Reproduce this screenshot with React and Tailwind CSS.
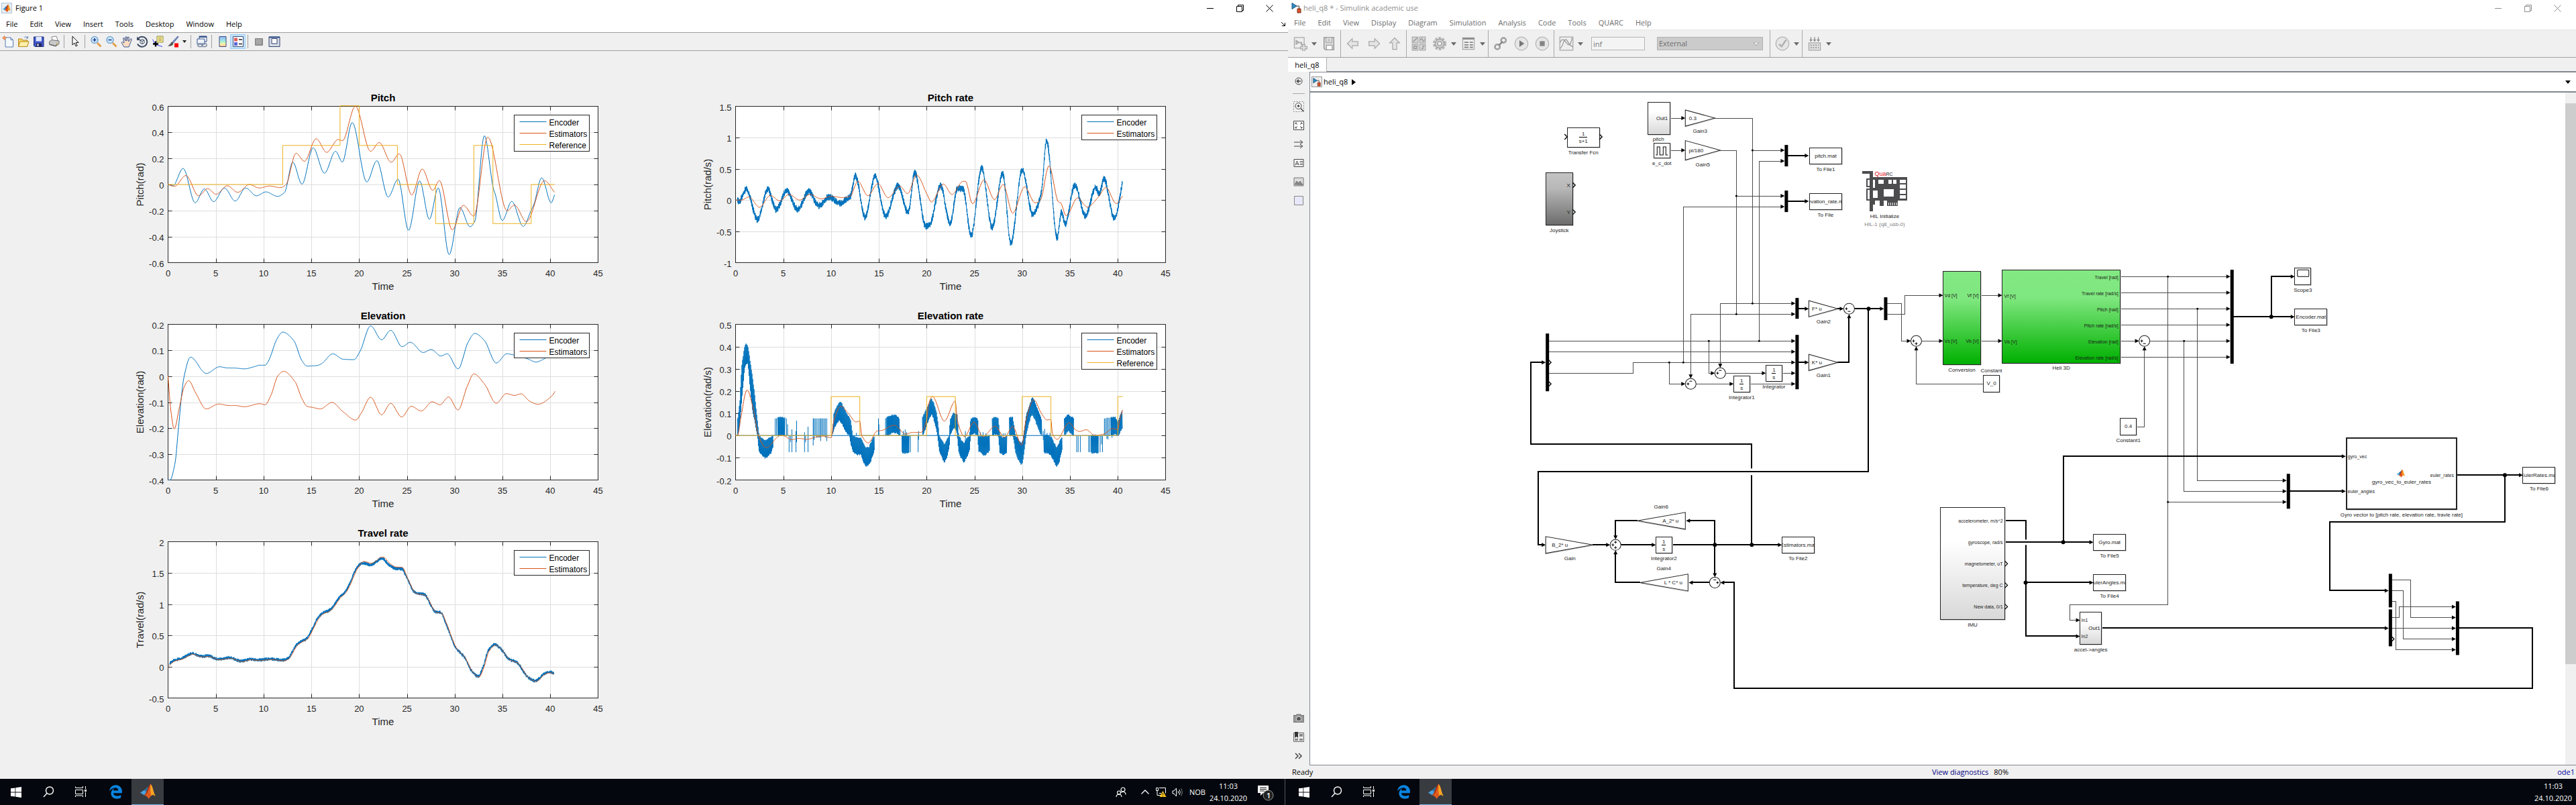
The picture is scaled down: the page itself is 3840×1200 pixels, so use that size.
import React from "react";
import { FaEdgeLegacy } from "react-icons/fa6";

/* ------------------------------------------------------------------ */
/* Shared                                                              */
/* ------------------------------------------------------------------ */

const BLUE = "#0072bd";
const ORANGE = "#d95319";
const YELLOW = "#edb120";

function MatlabMark() {
  return (
    <g>
      <path d="M0 13 6 9.500 10 6 13 4 10 14 6 17Z" fill="#4aa3df" />
      <path d="M6 9.500 10 6 13 4 9.500 12Z" fill="#2c6f9f" />
      <path d="M13 4Q15 0 16 0Q18 0 20 8Q22 16 24 19Q20 15 17 18L13 23Q11 18 6 17Q9 15 10 11Z" fill="#e05a1c" />
      <path d="M16 0Q18 1 20 8Q22 16 24 19Q20 15 17 18Q15 9 16 0Z" fill="#f5a327" />
      <path d="M16 0Q13 8 10 15L6 17Q9 15 10 11L13 4Q15 0 16 0Z" fill="#8e2a12" />
    </g>
  );
}

function Icon({ size = 18, children, label }) {
  return (
    <svg width={size} height={size} viewBox="0 0 18 18" fill="none" aria-label={label}>
      {children}
    </svg>
  );
}

function MenuBar({ items, className }) {
  return (
    <nav className={className}>
      {items.map((m) => (
        <button key={m} type="button" className="px-[9px]">
          {m}
        </button>
      ))}
    </nav>
  );
}

function WindowButtons({ className }) {
  return (
    <div className={className}>
      <button type="button" aria-label="Minimize" className="flex w-11 justify-center">
        <svg width="10" height="10" stroke="currentColor"><path d="M0 5.500H10" /></svg>
      </button>
      <button type="button" aria-label="Maximize" className="flex w-11 justify-center">
        <svg width="11" height="11" stroke="currentColor" fill="none">
          <path d="M.5 2.500h8v8h-8zM2.500 2.500v-2h8v8h-2" />
        </svg>
      </button>
      <button type="button" aria-label="Close" className="flex w-11 justify-center">
        <svg width="11" height="11" stroke="currentColor"><path d="M.5.5l10 10M10.500.5l-10 10" /></svg>
      </button>
    </div>
  );
}

/* ------------------------------------------------------------------ */
/* Plot data                                                           */
/* ------------------------------------------------------------------ */

const pitchEncoder = [
  [0, 0], [0.5, -0.01], [1.58, 0.123], [2.84, -0.14], [3.8, -0.034], [4.77, -0.132], [5.9, -0.027],
  [7.03, -0.127], [8.12, -0.027], [9.25, -0.087], [10.25, -0.057], [11.45, -0.091], [12.2, -0.06],
  [13.05, 0.171], [14.02, 0.003], [15.18, 0.281], [16.37, 0.087], [17.53, 0.255], [18.24, 0.173],
  [19.27, 0.475], [20.8, 0.02], [21.85, 0.182], [23.04, -0.096], [24.07, 0.04], [25.17, -0.351],
  [26.33, 0.027], [27.35, -0.267], [28.27, -0.027], [29.42, -0.538], [30.55, -0.178], [31.6, -0.324],
  [32.1, -0.283], [33.1, 0.374], [34.03, -0.026], [34.25, -0.077], [34.98, -0.276], [35.97, -0.13],
  [37.17, -0.322], [37.98, -0.202], [38.3, -0.15], [39.1, 0.051], [40.1, -0.14], [40.45, -0.08],
];
const pitchEstimate = [
  [0, 0], [0.68, -0.014], [1.87, 0.069], [3.2, -0.087], [4.15, -0.032], [5.02, -0.075], [6.2, -0.01],
  [7.3, -0.06], [8.5, 0], [9.55, -0.027], [10.6, -0.012], [11.75, -0.024], [12.35, 0], [13.4, 0.24],
  [14.27, 0.178], [15.5, 0.351], [16.6, 0.247], [17.8, 0.345], [18.25, 0.336], [19.6, 0.6], [21.2, 0.255],
  [22.1, 0.322], [23.35, 0.171], [24.2, 0.235], [25.5, -0.08], [26.6, 0.118], [27.7, -0.045],
  [28.4, 0.029], [29.75, -0.348], [30.9, -0.16], [32, -0.243], [33.45, 0.363], [35.5, -0.202],
  [36.25, -0.158], [37.5, -0.285], [39.4, 0.029], [40.45, -0.06],
];
const pitchReference = [
  [0, 0], [12, 0], [12, 0.3], [18, 0.3], [18, 0.604], [20, 0.604], [20, 0.3], [24, 0.3], [24, 0], [28, 0],
  [28, -0.3], [32, -0.3], [32, 0.3], [34, 0.3], [34, -0.3], [38, -0.3], [38, 0], [40.45, 0],
];
const pitchRateEncoder = [
  [0, 0], [0.2, 0], [0.35, -0.02], [1.12, 0.17], [2.3, -0.31], [3.38, 0.17], [4.25, -0.15], [5.35, 0.15],
  [6.5, -0.15], [7.65, 0.14], [8.7, -0.09], [9.75, 0.05], [10.95, -0.05], [11.75, 0.03], [12, 0.05],
  [12.55, 0.39], [13.55, -0.27], [14.6, 0.38], [15.7, -0.26], [17, 0.23], [18.05, -0.2], [18.75, 0.44],
  [19.9, -0.42], [20.35, -0.38], [21.45, 0.23], [22.45, -0.38], [23.2, 0.18], [23.8, 0.18], [24.65, -0.57],
  [25.75, 0.51], [26.85, -0.44], [27.95, 0.43], [28.8, -0.69], [30, 0.49], [31.1, -0.23], [32, 0.12],
  [32.55, 0.95], [33.65, -0.6], [34.1, -0.2], [34.5, -0.38], [35.5, 0.24], [36.6, -0.25], [37.7, 0.2],
  [38.05, 0.1], [38.55, 0.34], [39.65, -0.29], [40.5, 0.28],
];
const pitchRateEstimate = [
  [0, 0], [0.6, 0], [1.4, 0.05], [2.5, -0.115], [3.65, 0.075], [4.6, -0.01], [5.6, 0.09], [6.7, 0],
  [7.8, 0.09], [8.95, 0.02], [10, 0.06], [11.25, 0.04], [12, 0.065], [12.8, 0.3], [13.85, 0.07],
  [14.9, 0.265], [15.95, 0.04], [17.2, 0.22], [18, 0.105], [18.95, 0.4], [20, 0.105], [20.5, -0.03],
  [21.75, 0.257], [22.65, 0.09], [23.8, 0.3], [24.05, 0.3], [24.8, -0.057], [26, 0.32], [27.1, 0.01],
  [28, 0.25], [29, -0.207], [30.25, 0.21], [31.35, -0.043], [31.9, 0], [32.8, 0.546], [33.8, -0.03],
  [34, -0.04], [34.6, -0.25], [35.8, 0.035], [36.8, -0.11], [37.95, 0.045], [38.75, 0.2], [39.85, -0.055],
  [40.5, 0.065],
];
const elevationEncoder = [
  [0, -0.4], [0.2, -0.4], [0.74, -0.333], [1.1, -0.196], [1.65, -0.007], [2.35, 0.0735], [4, 0.0107],
  [5.4, 0.0365], [6.2, 0.032], [7, 0.0315], [8, 0.0285], [9, 0.0365], [9.6, 0.0425], [10.15, 0.0425],
  [10.55, 0.062], [11.4, 0.144], [12, 0.17], [13.15, 0.138], [14, 0.0605], [14.55, 0.039], [15.55, 0.041],
  [16.05, 0.048], [17.25, 0.0864], [18.3, 0.0657], [19.45, 0.064], [20.1, 0.0967], [21.2, 0.194],
  [22.35, 0.1406], [23.3, 0.1768], [24.5, 0.114], [25.35, 0.131], [26.7, 0.0916], [27.55, 0.103],
  [28.55, 0.078], [29.2, 0.0864], [30.35, 0.0287], [31.4, 0.131], [32.1, 0.165], [33.1, 0.138],
  [34.35, 0.051], [35.45, 0.0864], [36.4, 0.08], [37.7, 0.066], [38.5, 0.0546], [39.6, 0.071], [40.5, 0.08],
];
const elevationEstimate = [
  [0, 0], [0.3, -0.135], [0.65, -0.203], [1.2, -0.118], [1.7, -0.04], [2.15, -0.017], [2.9, -0.065],
  [4, -0.126], [5.3, -0.107], [6.4, -0.113], [7, -0.113], [8, -0.1175], [9.6, -0.106], [10.15, -0.11],
  [10.75, -0.075], [11.5, 0.002], [12.1, 0.019], [13.3, -0.022], [14, -0.085], [14.55, -0.116],
  [15.1, -0.12], [15.95, -0.126], [17.15, -0.101], [18.3, -0.1365], [19.65, -0.169], [20.25, -0.14],
  [21.2, -0.081], [22.35, -0.1485], [23.3, -0.1045], [24.45, -0.157], [25.45, -0.116], [26.5, -0.134],
  [27.65, -0.0985], [28.45, -0.11], [29.35, -0.08], [30.35, -0.13], [31.3, -0.04], [32, 0.009],
  [33.15, -0.032], [34.35, -0.104], [35.4, -0.067], [36.25, -0.074], [36.95, -0.068], [37.8, -0.095],
  [38.7, -0.108], [40.2, -0.075], [40.5, -0.058],
];
/* [time, low, high] envelopes of the quantised encoder derivative */
const elevationRateBands = [
  [[0.25, 0, 0.08], [0.45, 0.05, 0.15], [0.65, 0.15, 0.31], [0.95, 0.3, 0.4], [1.1, 0.325, 0.41], [1.3, 0.32, 0.4],
   [1.5, 0.22, 0.34], [1.75, 0.12, 0.27], [2, 0.06, 0.18], [2.3, -0.01, 0.06], [2.45, -0.07, 0], [3, -0.1, -0.02],
   [3.3, -0.1, -0.02], [3.7, -0.08, -0.005], [3.95, -0.05, 0]],
  [[4.4, 0, 0.08], [5.2, 0, 0.08]],
  [[10.15, 0, 0.01], [10.3, 0.03, 0.1], [10.85, 0.07, 0.15], [11.1, 0.055, 0.145], [11.5, 0.02, 0.11], [11.9, 0, 0.08],
   [12.05, -0.04, 0.07], [12.25, -0.07, 0], [12.8, -0.088, -0.01], [13.1, -0.085, -0.01], [13.4, -0.125, -0.04],
   [13.7, -0.14, -0.055], [14, -0.13, -0.05], [14.3, -0.1, -0.02], [14.55, -0.06, 0]],
  [[15.85, 0, 0.083], [16.2, 0.005, 0.085], [16.5, 0.015, 0.093], [16.9, 0.01, 0.088], [17.15, 0, 0.075]],
  [[17.4, -0.075, 0], [17.8, -0.082, 0], [18.2, -0.075, 0]],
  [[19.55, 0, 0.08], [19.8, 0.02, 0.1], [20.3, 0.08, 0.15], [20.5, 0.095, 0.165], [20.7, 0.08, 0.15], [21, 0.03, 0.11],
   [21.15, 0, 0.07], [21.3, -0.07, 0], [21.6, -0.1, -0.02], [21.85, -0.12, -0.04], [22.1, -0.1, -0.02], [22.35, -0.06, 0],
   [22.45, 0, 0.07], [22.8, 0.03, 0.1], [23.05, 0.03, 0.1], [23.2, 0, 0.09], [23.35, -0.075, 0], [23.6, -0.1, -0.02],
   [23.9, -0.12, -0.035], [24.2, -0.1, -0.01], [24.5, -0.06, 0], [24.6, 0, 0.075], [25, 0.01, 0.083], [25.35, 0, 0.077],
   [25.42, -0.07, 0], [26, -0.09, -0.005], [26.6, -0.07, 0]],
  [[26.85, 0, 0.075], [27.1, 0.005, 0.08], [27.5, 0, 0.077], [27.65, -0.075, 0], [28, -0.088, -0.01], [28.4, -0.075, 0]],
  [[28.65, 0, 0.08], [29, 0, 0.08], [29.15, -0.03, 0.04], [29.3, -0.075, 0], [29.6, -0.11, -0.02], [29.9, -0.13, -0.035],
   [30.05, -0.12, -0.02], [30.25, -0.05, 0.04], [30.45, 0.01, 0.1], [30.9, 0.09, 0.155], [31.05, 0.095, 0.175],
   [31.3, 0.075, 0.155], [31.6, 0.04, 0.12], [31.95, 0, 0.08], [32.05, 0, 0.07]],
  [[32.25, -0.075, 0], [32.6, -0.08, 0], [33, -0.088, -0.005], [33.3, -0.115, -0.03], [33.6, -0.14, -0.055],
   [33.9, -0.115, -0.03], [34.2, -0.06, 0]],
  [[34.4, 0, 0.075], [34.8, 0.02, 0.093], [35.1, 0.01, 0.085], [35.4, 0, 0.075]],
  [[37.2, -0.077, 0], [37.6, -0.08, 0], [38, -0.078, 0]],
  [[39.25, 0, 0.08], [39.75, 0.005, 0.08], [40.05, 0, 0.06], [40.3, 0.02, 0.1], [40.5, 0.035, 0.112]],
];
const elevationRateSpikes = [
  [0.2, 0, 0.077], [4.15, 0, 0.077], [4.28, 0, 0.077], [5.32, 0, 0.077], [5.44, 0, 0.05], [5.6, -0.075, 0],
  [5.75, -0.03, 0], [5.9, -0.075, 0.028], [6.32, -0.075, 0.02], [6.39, -0.03, 0.067], [7.22, -0.075, 0.015],
  [7.32, -0.03, 0], [7.58, -0.075, 0.04], [8.12, -0.045, 0.077], [8.22, -0.02, 0.077], [8.35, 0, 0.077],
  [8.5, -0.01, 0.077], [8.65, -0.01, 0.077], [8.8, -0.01, 0.077], [8.9, -0.025, 0.077], [9.02, 0, 0.077],
  [9.15, 0, 0.077], [9.28, 0, 0.077], [9.4, -0.01, 0.077], [9.55, -0.025, 0.077], [12.65, 0, 0.012],
  [14.95, 0, 0.077], [15, 0, 0.05], [15.7, 0, 0.077], [15.78, 0, 0.08], [17.22, 0, 0.03], [17.55, -0.02, 0.02],
  [17.75, 0, 0.027], [17.9, 0, 0.015], [18.3, -0.075, 0], [19.1, -0.075, 0], [19.15, -0.02, 0.02],
  [24.05, -0.06, 0.02], [25.6, -0.02, 0.015], [25.9, 0, 0.015], [26.2, -0.02, 0.01], [28, 0, 0.01],
  [28.2, 0, 0.01], [32.2, -0.02, 0.02], [32.35, 0, 0.03], [32.6, 0, 0.012], [32.9, 0, 0.012],
  [35.7, -0.075, 0], [35.85, -0.075, 0], [36.08, -0.075, 0], [36.95, -0.075, 0], [37.08, -0.075, 0],
  [38.15, -0.075, 0], [38.28, -0.04, 0], [38.4, -0.075, 0], [38.6, 0, 0.077], [38.72, 0, 0.077],
  [38.85, -0.015, 0.08], [38.98, -0.018, 0.08], [39.1, 0, 0.08], [39.4, -0.01, 0.08],
];
const elevationRateEstimate = [
  [0, 0], [0.2, 0], [0.55, 0.08], [1.2, 0.205], [1.8, 0.13], [2.4, 0], [3.2, -0.055], [4.7, 0], [5, -0.001],
  [5.9, -0.018], [6.6, -0.013], [7.5, -0.017], [8.6, -0.005], [9.2, -0.003], [10, -0.01], [10.3, 0.07],
  [11, 0.131], [11.8, 0.1], [12.6, 0.061], [13, 0.065], [13.2, 0], [13.9, -0.033], [14.8, 0.02], [15.4, 0.024],
  [16.1, 0.04], [16.6, 0.046], [17.8, 0.007], [18.5, 0.014], [19.4, 0.014], [20, 0.07], [20.2, 0.14],
  [20.6, 0.176], [21.85, 0.065], [23, 0.155], [23.2, 0.07], [23.95, -0.005], [24.95, 0.06], [25.9, -0.005],
  [27.15, 0.042], [28.15, -0.008], [29, 0.04], [29.95, -0.043], [30.4, 0.07], [31.2, 0.161], [32, 0.1],
  [32.6, 0.07], [33, 0.072], [33.15, 0.01], [33.65, -0.017], [34.9, 0.058], [35.6, 0.025], [36, 0.018],
  [36.7, 0.026], [37.6, 0], [38.5, 0.006], [39.5, 0.031], [40, 0.026], [40.2, 0.07], [40.5, 0.115],
];
const elevationRateReference = [
  [0, 0], [10, 0], [10, 0.175], [13, 0.175], [13, 0], [20, 0], [20, 0.175], [23, 0.175], [23, 0], [30, 0],
  [30, 0.175], [33, 0.175], [33, 0], [40, 0], [40, 0.175], [40.5, 0.175],
];
const travelRateEncoder = [
  [0, 0.03], [0.6, 0.1], [1.4, 0.13], [1.9, 0.17], [2.5, 0.21], [3.5, 0.165], [4.2, 0.175], [5.25, 0.12],
  [6.4, 0.145], [7.7, 0.09], [8.6, 0.12], [9.6, 0.11], [10.7, 0.125], [12, 0.105], [12.5, 0.13], [13.5, 0.36],
  [14, 0.41], [14.5, 0.45], [15.1, 0.61], [15.6, 0.76], [16.1, 0.85], [16.95, 0.91], [18, 1.12], [18.55, 1.2],
  [18.95, 1.31], [19.75, 1.58], [20.4, 1.66], [21.2, 1.63], [22.4, 1.73], [23.15, 1.625], [23.8, 1.57],
  [24.45, 1.565], [24.9, 1.455], [25.9, 1.18], [26.8, 1.155], [28, 0.88], [28.55, 0.865], [29.1, 0.685],
  [30.1, 0.31], [31.05, 0.145], [31.7, -0.05], [32.45, -0.155], [33, 0.01], [33.5, 0.257], [34.2, 0.355],
  [34.8, 0.29], [35.7, 0.12], [36.5, 0.07], [37.65, -0.165], [38.45, -0.225], [39.4, -0.107], [40, -0.085],
  [40.4, -0.11],
];
const travelRateEstimate = travelRateEncoder.map(([t, v]) => [
  t === 0 ? 0 : Math.min(t + 0.08, 40.4),
  t === 0 ? 0 : t > 20 && t < 24.5 ? v + 0.025 : v - 0.01,
]);

/* Monotone cubic interpolation of sparse samples */
function smooth(points, step) {
  const n = points.length;
  const slope = [];
  for (let i = 0; i < n - 1; i++) {
    slope.push((points[i + 1][1] - points[i][1]) / (points[i + 1][0] - points[i][0]));
  }
  const m = points.map((_, i) => {
    if (i === 0) return slope[0];
    if (i === n - 1) return slope[n - 2];
    const a = slope[i - 1];
    const b = slope[i];
    return a * b <= 0 ? 0 : (2 * a * b) / (a + b);
  });
  const out = [];
  let k = 0;
  const end = points[n - 1][0];
  for (let t = points[0][0]; t <= end; t += step) {
    while (k < n - 2 && t > points[k + 1][0]) k++;
    const [x0, y0] = points[k];
    const [x1, y1] = points[k + 1];
    const h = x1 - x0;
    const s = (t - x0) / h;
    const s2 = s * s;
    const s3 = s2 * s;
    out.push([
      t,
      (2 * s3 - 3 * s2 + 1) * y0 + (s3 - 2 * s2 + s) * h * m[k] + (3 * s2 - 2 * s3) * y1 + (s3 - s2) * h * m[k + 1],
    ]);
  }
  return out;
}

function noise(i) {
  const v = Math.sin(i * 127.1 + 11.7) * 43758.5453;
  return (v - Math.floor(v)) * 2 - 1;
}

function noisy(points, amplitude) {
  return smooth(points, 0.02).map(([t, v], i) => [t, v + (t < 0.2 ? 0 : amplitude * (i % 2 ? 1 : -1) * (0.55 + 0.45 * noise(i)))]);
}

function bandPaths(bands, spikes) {
  const runs = bands.map((band) => {
    const out = [];
    let k = 0;
    let i = 0;
    for (let t = band[0][0]; t <= band[band.length - 1][0]; t += 0.035) {
      while (k < band.length - 2 && t > band[k + 1][0]) k++;
      const [t0, l0, h0] = band[k];
      const [t1, l1, h1] = band[k + 1];
      const s = (t - t0) / (t1 - t0);
      const jitter = 0.004 * noise(i);
      out.push([t, i % 2 ? l0 + (l1 - l0) * s + jitter : h0 + (h1 - h0) * s + jitter]);
      i++;
    }
    return out;
  });
  spikes.forEach(([t, lo, hi]) => runs.push([[t, lo], [t, hi]]));
  runs.push([[0, 0], [40, 0]]);
  return runs;
}

const LEGEND = [
  ["Encoder", BLUE],
  ["Estimators", ORANGE],
  ["Reference", YELLOW],
];

const charts = [
  {
    title: "Pitch", ylabel: "Pitch(rad)", height: 325, plot: 233, min: -0.6, max: 0.6, ticks: [0.6, 0.4, 0.2, 0, -0.2, -0.4, -0.6],
    legend: 3,
    series: [[smooth(pitchEncoder, 0.05)], [smooth(pitchEstimate, 0.05)], [pitchReference]],
  },
  {
    title: "Pitch rate", ylabel: "Pitch(rad/s)", height: 325, plot: 233, min: -1, max: 1.5, ticks: [1.5, 1, 0.5, 0, -0.5, -1],
    legend: 2,
    series: [[noisy(pitchRateEncoder, 0.056)], [smooth(pitchRateEstimate, 0.05)]],
  },
  {
    title: "Elevation", ylabel: "Elevation(rad)", height: 324, plot: 232, min: -0.4, max: 0.2, ticks: [0.2, 0.1, 0, -0.1, -0.2, -0.3, -0.4],
    legend: 2,
    series: [[smooth(elevationEncoder, 0.05)], [smooth(elevationEstimate, 0.05)]],
  },
  {
    title: "Elevation rate", ylabel: "Elevation(rad/s)", height: 324, plot: 232, min: -0.2, max: 0.5,
    ticks: [0.5, 0.4, 0.3, 0.2, 0.1, 0, -0.1, -0.2],
    legend: 3,
    series: [bandPaths(elevationRateBands, elevationRateSpikes), [smooth(elevationRateEstimate, 0.05)], [elevationRateReference]],
  },
  {
    title: "Travel rate", ylabel: "Travel(rad/s)", height: 325, plot: 233, min: -0.5, max: 2, ticks: [2, 1.5, 1, 0.5, 0, -0.5],
    legend: 2,
    series: [[noisy(travelRateEncoder, 0.028)], [smooth(travelRateEstimate, 0.05)]],
  },
];

const LEFT = 102.5;
const TOP = 50.5;
const PLOT_W = 641;
const COLORS = [BLUE, ORANGE, YELLOW];

function Chart({ title, ylabel, height, plot, min, max, ticks, legend, series }) {
  const x = (t) => LEFT + (t / 45) * PLOT_W;
  const y = (v) => TOP + ((max - v) / (max - min)) * plot;
  const bottom = TOP + plot;
  const right = LEFT + PLOT_W;
  const path = (pts) => "M" + pts.map(([t, v]) => `${x(t).toFixed(1)} ${y(v).toFixed(1)}`).join("L");
  const xt = [0, 5, 10, 15, 20, 25, 30, 35, 40, 45];
  const grid = xt.slice(1, -1).map((t) => `M${Math.round(x(t)) + 0.5} ${TOP}V${bottom}`).join("") +
    ticks.slice(1, -1).map((v) => `M${LEFT} ${Math.round(y(v)) + 0.5}H${right}`).join("");
  const marks = xt.slice(1, -1).map((t) => `M${Math.round(x(t)) + 0.5} ${TOP}v6M${Math.round(x(t)) + 0.5} ${bottom}v-6`).join("") +
    ticks.slice(1, -1).map((v) => `M${LEFT} ${Math.round(y(v)) + 0.5}h6M${right} ${Math.round(y(v)) + 0.5}h-6`).join("");
  const lx = right - 125;
  return (
    <svg viewBox={`0 0 846 ${height}`} className="block h-auto w-full overflow-visible font-['Liberation_Sans',Arial,sans-serif]" fill="none" role="img" aria-label={title}>
      <rect x={LEFT} y={TOP} width={PLOT_W} height={plot} fill="#fff" />
      <path d={grid} stroke="#dedede" />
      <path d={marks} stroke="#262626" />
      <rect x={LEFT} y={TOP} width={PLOT_W} height={plot} stroke="#262626" />
      {series.map((runs, i) => (
        <path key={i} d={runs.map(path).join("")} stroke={COLORS[i]} strokeLinejoin="round" />
      ))}
      <text x={LEFT + PLOT_W / 2} y={TOP - 8} textAnchor="middle" className="fill-black text-[15px] font-bold">{title}</text>
      {xt.map((t) => (
        <text key={t} x={x(t)} y={bottom + 20} textAnchor="middle" className="fill-[#262626] text-[13px]">{t}</text>
      ))}
      {ticks.map((v) => (
        <text key={v} x={LEFT - 6} y={y(v) + 6} textAnchor="end" className="fill-[#262626] text-[13px]">{v}</text>
      ))}
      <text x={LEFT + PLOT_W / 2} y={bottom + 40} textAnchor="middle" className="fill-[#262626] text-[15px]">Time</text>
      <text transform={`translate(${LEFT - 37} ${TOP + plot / 2}) rotate(-90)`} textAnchor="middle" className="fill-[#262626] text-[15px]">{ylabel}</text>
      <rect x={lx} y={TOP + 13} width="112" height={legend === 3 ? 54 : 37} fill="#fff" stroke="#262626" />
      {LEGEND.slice(0, legend).map(([name, color], i) => (
        <g key={name}>
          <path d={`M${lx + 8} ${TOP + 23 + i * 17}h40`} stroke={color} />
          <text x={lx + 52} y={TOP + 28 + i * 17} className="fill-black text-[12px]">{name}</text>
        </g>
      ))}
    </svg>
  );
}

/* ------------------------------------------------------------------ */
/* Figure window                                                       */
/* ------------------------------------------------------------------ */

function ToolSep() {
  return <span className="mr-1 ml-[3px] h-5 w-px bg-[#a0a0a0]" />;
}

function Tool({ label, active, children }) {
  return (
    <button
      type="button"
      aria-label={label}
      className={
        active
          ? "flex h-[22px] w-[23px] items-center justify-center border border-[#99d1ff] bg-[#c4e1f7]"
          : "flex h-[22px] w-[23px] items-center justify-center"
      }
    >
      <Icon>{children}</Icon>
    </button>
  );
}

function Magnifier({ plus }) {
  return (
    <>
      <path d="M11 11l5.500 5.500" stroke="#e0a050" strokeWidth="3" />
      <circle cx="7" cy="6.500" r="5" fill="#cfeaff" stroke="#7ba7d0" strokeWidth="1.500" />
      <path d={plus ? "M4.500 6.500h5M7 4v5" : "M4.500 6.500h5"} stroke="#1a3f8f" strokeWidth="1.600" />
    </>
  );
}

function FigureToolbar() {
  return (
    <div className="flex h-7 items-center border-y border-[#a0a0a0] bg-[#f0f0f0] text-black">
      <Tool label="New figure">
        <path d="M5 3h8l3.500 3.500V17H5z" fill="#f4f9ff" stroke="#5b7db5" />
        <path d="M13 3v3.500h3.500" stroke="#5b7db5" />
        <circle cx="3.500" cy="3.500" r="2" fill="#ffe9c0" stroke="#e2703a" />
        <path d="M3.500 0v7M0 3.500h7" stroke="#e2703a" strokeWidth=".6" />
      </Tool>
      <Tool label="Open file">
        <path d="M1.500 5h5l1.500 2h7v9h-13.500z" fill="#f7d36a" stroke="#b48a1d" />
        <path d="M4 9h13l-2.500 7.500H1.500z" fill="#fff0a8" stroke="#b48a1d" />
        <path d="M10 3c2-2 4-1.500 5 .5M15.500 1v3h-3" stroke="#5580b8" />
      </Tool>
      <Tool label="Save figure">
        <path d="M1.500 2h14.500v14.500H3l-1.500-1.500z" fill="#3f55c8" stroke="#222f80" />
        <path d="M4.500 2h8.500v6.500H4.500z" fill="#dfe8ff" />
        <path d="M5 11.500h8v5H5z" fill="#23285c" />
        <path d="M6.500 12.500h2v3h-2z" fill="#fff" />
      </Tool>
      <Tool label="Print figure">
        <path d="M5 2l7-1 2 6-8 1.500z" fill="#fff" stroke="#8a8a8a" />
        <path d="M1.500 9l4-2.500L16 8v4.500l-5 3.500-9.500-2.500z" fill="#c9c9c9" stroke="#6c6c6c" />
        <path d="M3 13l7 2.500 3-2" stroke="#555" />
        <circle cx="13" cy="12" r="1" fill="#d7a32c" />
      </Tool>
      <ToolSep />
      <Tool label="Edit plot">
        <path d="M5 1v13l3-3 2.200 5 2-1-2.200-4.500H14z" fill="#fff" stroke="#111" />
      </Tool>
      <ToolSep />
      <Tool label="Zoom in"><Magnifier plus /></Tool>
      <Tool label="Zoom out"><Magnifier /></Tool>
      <Tool label="Pan">
        <path d="M5 17L1 10.500l1.500-1L5 11 3.500 4l1.500-.5L7 8V2h2v6l1.500-6 1.800.5L11.500 9 15 4.500l1.500 1L13.500 13 12 17z" fill="#fbdcc0" stroke="#3f5c96" />
      </Tool>
      <Tool label="Rotate 3D">
        <path d="M3 4.500a7.500 7.500 0 1 1-1 8" stroke="#3d4b66" strokeWidth="2" />
        <path d="M1 1.500v5.500h5.500z" fill="#3d4b66" />
        <path d="M6 7l3-1.500L12 7v4l-3 1.500L6 11zM6 7l3 1.500L12 7M9 8.500v4" stroke="#3d4b66" fill="#fff" />
      </Tool>
      <Tool label="Data cursor">
        <path d="M8 1h9v9H8z" fill="#fff3a0" stroke="#8c8840" />
        <path d="M10 3.500h5M10 5.500h5M10 7.500h5" stroke="#9f9a50" />
        <path d="M1 6c2 0 2 5 5 7s6 2 10 3.500" stroke="#3030ff" />
        <path d="M6 8.500v8M2 12.500h8" stroke="#000" strokeWidth="2.400" />
      </Tool>
      <Tool label="Brush">
        <path d="M16 1L8 9.500l1.500 1.500L17 2z" fill="#8fa5d8" stroke="#4a5f98" />
        <path d="M8 9.500c-2.500 0-2.500 3.500-7 6 4 1 8.500-.5 8.500-4.500z" fill="#555" />
        <path d="M11 11.500h6v6h-6z" fill="#f00" />
      </Tool>
      <button type="button" aria-label="Brush options" className="flex w-3 justify-center">
        <svg width="6" height="4"><path d="M0 0h6L3 4z" fill="#222" /></svg>
      </button>
      <ToolSep />
      <Tool label="Link plot">
        <path d="M5 1h11v8H5z" fill="#fff" stroke="#33518a" />
        <path d="M5 2h11" stroke="#33518a" strokeWidth="2" />
        <path d="M2 5h11v8H2z" fill="#eef3fb" stroke="#33518a" />
        <rect x="3" y="12" width="7" height="4.500" rx="2" stroke="#7b8ba5" strokeWidth="1.500" />
        <rect x="9" y="12" width="7" height="4.500" rx="2" stroke="#7b8ba5" strokeWidth="1.500" />
      </Tool>
      <ToolSep />
      <Tool label="Insert colorbar">
        <defs>
          <linearGradient id="cbar" x1="0" y1="0" x2="0" y2="1">
            <stop offset="0" stopColor="#8fb2ff" />
            <stop offset=".5" stopColor="#a5f0d5" />
            <stop offset=".75" stopColor="#fff2a0" />
            <stop offset="1" stopColor="#ffb49c" />
          </linearGradient>
        </defs>
        <path d="M4 1.500h10v15H4z" fill="url(#cbar)" stroke="#3a4f7a" />
      </Tool>
      <Tool label="Insert legend" active>
        <path d="M1.500 1.500h15v15h-15z" fill="#fff" stroke="#3a4f7a" />
        <path d="M3 3.500h5v5H3z" fill="#e75c5c" />
        <path d="M3 10h5v5H3z" fill="#5a67d8" />
        <path d="M10 6h5M10 12.500h5" stroke="#222" strokeWidth="1.500" />
      </Tool>
      <ToolSep />
      <Tool label="Hide plot tools">
        <path d="M3.500 4.500h11v10h-11z" fill="#999" stroke="#808080" />
        <path d="M4.500 5.500h8v7h-8z" fill="#a8a8a8" />
      </Tool>
      <Tool label="Show plot tools">
        <path d="M1 2h16v14.500H1z" fill="#d5dbe6" stroke="#33456e" />
        <path d="M1 2.500h16" stroke="#33518a" strokeWidth="2" />
        <path d="M5 4.500h8v7.500H5z" fill="#fff" stroke="#33456e" />
      </Tool>
    </div>
  );
}

function FigureWindow() {
  return (
    <section className="flex flex-1 flex-col bg-[#f0f0f0]">
      <header className="flex h-6 items-center bg-white text-black">
        <svg width="16" height="16" viewBox="0 0 24 24" className="ml-0.5">
          <path d="M.5.5h23v23H.5z" fill="#e8eef4" stroke="#7f9db9" />
          <g transform="translate(3 4) scale(.75)"><MatlabMark /></g>
        </svg>
        <h1 className="ml-[5px] flex-1">Figure 1</h1>
        <WindowButtons className="mr-1.5 flex h-4 items-center" />
      </header>
      <div className="flex h-6 items-center justify-between bg-white">
        <MenuBar className="flex text-black" items={["File", "Edit", "View", "Insert", "Tools", "Desktop", "Window", "Help"]} />
        <button type="button" aria-label="Dock figure" className="mr-1">
          <svg width="6" height="6" stroke="#000" fill="none"><path d="M0 0l5 5M5.500 1v4.500H1" /></svg>
        </button>
      </div>
      <FigureToolbar />
      <div className="grid grid-cols-2 items-start pt-8 pr-20 pl-[148px]">
        {charts.map((c) => (
          <Chart key={c.title} {...c} />
        ))}
      </div>
    </section>
  );
}

/* ------------------------------------------------------------------ */
/* Simulink model canvas                                               */
/* ------------------------------------------------------------------ */

function T({ x, y, children, anchor = "middle", port, gray }) {
  return (
    <text
      x={x}
      y={y}
      textAnchor={anchor}
      dominantBaseline="central"
      className={port ? "fill-[#1a1a1a] text-[7px]" : gray ? "fill-[#808080] text-[8px]" : "fill-[#1a1a1a] text-[8px]"}
    >
      {children}
    </text>
  );
}

function Wire({ p, thick, end = true }) {
  const pts = p.map((q) => [...q]);
  const last = pts[pts.length - 1];
  const prev = pts[pts.length - 2];
  const dx = Math.sign(last[0] - prev[0]);
  const dy = Math.sign(last[1] - prev[1]);
  const [tx, ty] = last;
  if (end) {
    last[0] -= dx * 4;
    last[1] -= dy * 4;
  }
  const bx = tx - dx * 6;
  const by = ty - dy * 6;
  return (
    <>
      <polyline points={pts.map((q) => q.join(",")).join(" ")} fill="none" stroke={thick ? "#000" : "#4d4d4d"} strokeWidth={thick ? 2 : 1} shapeRendering="crispEdges" />
      {end && <path d={`M${tx} ${ty}L${bx - dy * 3} ${by - dx * 3}L${bx + dy * 3} ${by + dx * 3}Z`} fill="#000" />}
    </>
  );
}

function Dot({ x, y, big }) {
  return <circle cx={x} cy={y} r={big ? 3 : 1.5} fill="#000" />;
}

function Block({ x, y, w, h, fill = "#fff", text, label, labelY, stroke = 1 }) {
  return (
    <>
      <rect x={x + 1} y={y + 1} width={w} height={h} fill="none" stroke="#d4d4d4" shapeRendering="crispEdges" />
      <rect x={x} y={y} width={w} height={h} fill={fill} stroke="#222" strokeWidth={stroke} shapeRendering="crispEdges" />
      {text && <T x={x + w / 2} y={y + h / 2}>{text}</T>}
      {label && <T x={x + w / 2} y={labelY || y + h + 8}>{label}</T>}
    </>
  );
}

function FileBlock({ id, x, y, text, label }) {
  return (
    <>
      <clipPath id={id}><rect x={x} y={y} width="48" height="24" /></clipPath>
      <Block x={x} y={y} w={48} h={24} label={label} />
      <g clipPath={`url(#${id})`}><T x={x + 24} y={y + 12}>{text}</T></g>
    </>
  );
}

function Frac({ x, y, w, h, top, bottom, label }) {
  return (
    <>
      <Block x={x} y={y} w={w} h={h} label={label} />
      <T x={x + w / 2} y={y + h / 2 - 5}>{top}</T>
      <path d={`M${x + w / 2 - (w > 30 ? 6 : 3)} ${y + h / 2}h${w > 30 ? 12 : 6}`} stroke="#000" shapeRendering="crispEdges" />
      <T x={x + w / 2} y={y + h / 2 + 6}>{bottom}</T>
    </>
  );
}

function Gain({ x, y, h, w, text, tx, label, lx, ly }) {
  return (
    <>
      <path d={`M${x} ${y - h / 2 + 1}V${y + h / 2 + 1}L${x + w} ${y + 1}Z`} fill="none" stroke="#c8c8c8" />
      <path d={`M${x} ${y - h / 2}V${y + h / 2}L${x + w} ${y}Z`} fill="#fff" stroke="#222" />
      <T x={tx} y={y}>{text}</T>
      <T x={lx} y={ly}>{label}</T>
    </>
  );
}

function Sum({ x, y, signs }) {
  const off = { l: [-4, 0], r: [4, 0], t: [0, -4], b: [0, 4] };
  return (
    <>
      <circle cx={x} cy={y} r="8" fill="#fff" stroke="#222" />
      {signs.map(([side, s]) => {
        const [ox, oy] = off[side];
        const cx = x + ox;
        const cy = y + oy;
        return <path key={side} d={`M${cx - 2} ${cy}h4${s === "+" ? `M${cx} ${cy - 2}v4` : ""}`} stroke="#000" />;
      })}
    </>
  );
}

function Bar({ x, y1, y2 }) {
  return <rect x={x} y={y1} width="5" height={y2 - y1} fill="#000" />;
}

function Port({ x, y }) {
  return <path d={`M${x} ${y - 4}l4 4l-4 4`} fill="none" stroke="#000" strokeWidth="1.300" />;
}

function HilBoard() {
  return (
    <g shapeRendering="crispEdges">
      <g fill="#4d4d4f">
        <path d="M2776 255h16v9h51v35h-14v8h-16v-8h-5v8h-6v-8h-7v6h-3v10h-5v-56h-11z" />
        <path d="M2782 266h6v13h-6zM2782 281h6v18h-6z" />
      </g>
      <g fill="#fff">
        <path d="M2784 268h3v9h-3zM2784 283h3v14h-3zM2792 268h3v12h-3zM2792 284h7v11h-7zM2800 268h8v6h-8z" />
        <path d="M2815 268h5v6h-5zM2822 268h5v6h-5zM2832 268h9v5h-9zM2832 275h9v6h-9zM2832 283h9v6h-9zM2832 291h9v5h-9zM2808 282h15v11h-15z" />
        <path d="M2815 302h1v4h-1zM2818 302h1v4h-1zM2821 302h1v4h-1zM2824 302h1v4h-1zM2827 302h1v4h-1z" />
      </g>
    </g>
  );
}

function ModelCanvas() {
  return (
    <svg viewBox="1953 138 1870 1001" className="block h-auto min-w-0 flex-1 self-start bg-white font-['Liberation_Sans',Arial,sans-serif]" role="img" aria-label="heli_q8 model">
      <defs>
        <linearGradient id="green" x1="0" y1="0" x2="0" y2="1">
          <stop offset="0" stopColor="#83e983" />
          <stop offset=".3" stopColor="#7fe77f" />
          <stop offset="1" stopColor="#00b000" />
        </linearGradient>
        <linearGradient id="dark" x1="0" y1="0" x2="0" y2="1">
          <stop offset="0" stopColor="#c4c4c4" />
          <stop offset=".3" stopColor="#b8b8b8" />
          <stop offset="1" stopColor="#6c6c6c" />
        </linearGradient>
        <linearGradient id="light" x1="0" y1="0" x2="0" y2="1">
          <stop offset=".3" stopColor="#fff" />
          <stop offset="1" stopColor="#d8d8d8" />
        </linearGradient>
      </defs>

      {/* signal lines */}
      <Wire p={[[2489, 176], [2512, 176]]} />
      <Wire p={[[2489, 224], [2512, 224]]} />
      <Wire p={[[2556, 176], [2612, 176], [2612, 452], [2676, 452]]} />
      <Wire p={[[2612, 224], [2660, 224]]} />
      <Wire p={[[2612, 452], [2564, 452], [2564, 548]]} />
      <Wire p={[[2564, 224], [2588, 224], [2588, 468], [2676, 468]]} />
      <Wire p={[[2588, 292], [2660, 292]]} />
      <Wire p={[[2588, 468], [2520, 468], [2520, 564]]} />
      <Wire p={[[2622, 508], [2622, 240], [2660, 240]]} />
      <Wire p={[[2509, 540], [2509, 308], [2660, 308]]} />
      <Wire p={[[2308, 508], [2676, 508]]} />
      <Wire p={[[2308, 524], [2676, 524]]} />
      <Wire p={[[2308, 556], [2434, 556], [2434, 540], [2676, 540]]} />
      <Wire p={[[2547, 508], [2547, 556], [2556, 556]]} />
      <Wire p={[[2488, 540], [2488, 572], [2512, 572]]} />
      <Wire p={[[2572, 556], [2632, 556]]} />
      <Wire p={[[2656, 556], [2676, 556]]} />
      <Wire p={[[2528, 572], [2584, 572]]} />
      <Wire p={[[2608, 572], [2676, 572]]} />
      <Wire p={[[2812, 452], [2834, 452], [2834, 508], [2848, 508]]} />
      <Wire p={[[2812, 468], [2839, 468], [2839, 440], [2896, 440]]} />
      <Wire p={[[2864, 508], [2896, 508]]} />
      <Wire p={[[2956, 572], [2856, 572], [2856, 516]]} />
      <Wire p={[[2952, 440], [2984, 440]]} />
      <Wire p={[[2952, 508], [2984, 508]]} />
      {[412, 436, 460, 484, 532].map((y) => (
        <Wire key={y} p={[[3160, y], [3324, y]]} />
      ))}
      <Wire p={[[3160, 508], [3188, 508]]} />
      <Wire p={[[3204, 508], [3324, 508]]} />
      <Wire p={[[3184, 636], [3196, 636], [3196, 516]]} />
      <Wire p={[[3231, 412], [3231, 901], [3085, 901], [3085, 924], [3100, 924]]} />
      <Wire p={[[3231, 748], [3408, 748]]} />
      <Wire p={[[3255, 508], [3255, 732], [3408, 732]]} />
      <Wire p={[[3275, 460], [3275, 716], [3408, 716]]} />
      <Wire p={[[3564, 864], [3593, 864], [3593, 920], [3660, 920]]} />
      <Wire p={[[3564, 880], [3582, 880], [3582, 952], [3660, 952]]} />
      <Wire p={[[3564, 896], [3571, 896], [3571, 968], [3660, 968]]} />
      <Wire p={[[3564, 920], [3576, 920], [3576, 904], [3660, 904]]} />
      <Wire p={[[3564, 936], [3660, 936]]} />

      {/* vector signal lines */}
      <Wire thick p={[[2664, 232], [2696, 232]]} />
      <Wire thick p={[[2664, 300], [2696, 300]]} />
      <Wire thick p={[[2680, 460], [2696, 460]]} />
      <Wire thick p={[[2680, 540], [2696, 540]]} />
      <Wire thick p={[[2739, 460], [2748, 460]]} />
      <Wire thick p={[[2739, 540], [2756, 540], [2756, 468]]} />
      <Wire thick p={[[2764, 460], [2808, 460]]} />
      <Wire thick p={[[2611, 812], [2611, 662], [2282, 662], [2282, 540], [2304, 540]]} />
      <path d="M2606 698h10v10h-10z" fill="#fff" />
      <Wire thick p={[[2785, 460], [2785, 703], [2293, 703], [2293, 812], [2304, 812]]} />
      <Wire thick p={[[2374, 812], [2400, 812]]} />
      <Wire thick p={[[2416, 812], [2468, 812]]} />
      <Wire thick p={[[2492, 812], [2656, 812]]} />
      <Wire thick p={[[2556, 812], [2556, 776], [2513, 776]]} />
      <Wire thick p={[[2441, 776], [2408, 776], [2408, 804]]} />
      <Wire thick p={[[2556, 812], [2556, 860]]} />
      <Wire thick p={[[2548, 868], [2517, 868]]} />
      <Wire thick p={[[2445, 868], [2408, 868], [2408, 820]]} />
      <Wire thick p={[[3664, 936], [3774, 936], [3774, 1026], [2585, 1026], [2585, 868], [2564, 868]]} />
      <Wire thick p={[[3328, 472], [3420, 472]]} />
      <Wire thick p={[[3385, 472], [3385, 412], [3420, 412]]} />
      <Wire thick p={[[2988, 776], [3019, 776], [3019, 948], [3100, 948]]} />
      <path d="M3017 804h5v8h-5z" fill="#fff" />
      <Wire thick p={[[2988, 808], [3120, 808]]} />
      <Wire thick p={[[3075, 808], [3075, 680], [3496, 680]]} />
      <Wire thick p={[[3019, 868], [3120, 868]]} />
      <Wire thick p={[[3132, 936], [3560, 936]]} />
      <Wire thick p={[[3412, 732], [3496, 732]]} />
      <Wire thick p={[[3661, 708], [3760, 708]]} />
      <Wire thick p={[[3733, 708], [3733, 778], [3472, 778], [3472, 880], [3560, 880]]} />

      {[[2612, 224], [2612, 452], [2588, 292], [2588, 468], [2622, 508], [2547, 508], [2509, 540], [2488, 540],
        [3231, 412], [3275, 460], [3255, 508], [3231, 748]].map(([x, y]) => (
        <Dot key={`${x}-${y}`} x={x} y={y} />
      ))}
      {[[2785, 460], [2556, 812], [2611, 812], [3385, 472], [3075, 808], [3019, 868], [3733, 708]].map(([x, y]) => (
        <Dot key={`${x}-${y}`} x={x} y={y} big />
      ))}

      {/* sources and plant inputs */}
      <Frac x={2336} y={190} w={48} h={29} top="1" bottom="s+1" label="Transfer Fcn" />
      <Port x={2332} y={204} />
      <Port x={2384} y={204} />
      <Block x={2304} y={257} w={40} h={78} fill="url(#dark)" label="Joystick" />
      <T x={2338} y={276}>X</T>
      <T x={2338} y={316}>Y</T>
      <Port x={2344} y={276} />
      <Port x={2344} y={316} />
      <Block x={2456} y={152} w={33} h={48} fill="url(#light)" />
      <T x={2486} y={176} anchor="end">Out1</T>
      <T x={2472} y={207}>pitch</T>
      <Gain x={2512} y={176} h={24} w={44} text="0.3" tx={2523} label="Gain3" lx={2534} ly={195} />
      <Block x={2465} y={213} w={24} h={22} label="e_c_dot" />
      <path d="M2468 231h2v-12h4v12h5v-12h4v12h3" fill="none" stroke="#000" />
      <Gain x={2512} y={224} h={29} w={52} text="pi/180" tx={2528} label="Gain5" lx={2538} ly={245} />

      <Bar x={2660} y1={216} y2={248} />
      <FileBlock id="f1" x={2697} y={220} text="pitch.mat" label="To File1" />
      <Bar x={2660} y1={284} y2={316} />
      <FileBlock id="f0" x={2697} y={288} text="elevation_rate.mat" label="To File" />

      <HilBoard />
      <text x="2794" y="262" className="text-[9px]"><tspan fill="#e01020">Qua</tspan><tspan fill="#222" className="text-[7px]">RC</tspan></text>
      <T x={2809} y={322}>HIL Initialize</T>
      <T x={2809} y={334} gray>HIL-1 (q8_usb-0)</T>

      {/* feedback controller */}
      <Bar x={2304} y1={497} y2={583} />
      <Port x={2308} y={540} />
      <Port x={2308} y={572} />
      <Sum x={2564} y={556} signs={[["l", "+"], ["t", "-"]]} />
      <Sum x={2520} y={572} signs={[["l", "+"], ["t", "-"]]} />
      <Frac x={2632} y={544} w={24} h={24} top="1" bottom="s" label="Integrator" />
      <Frac x={2584} y={560} w={24} h={24} top="1" bottom="s" label="Integrator1" />
      <Bar x={2676} y1={444} y2={475} />
      <Bar x={2676} y1={499} y2={580} />
      <Gain x={2696} y={460} h={24} w={43} text="F* u" tx={2708} label="Gain2" lx={2718} ly={479} />
      <Gain x={2696} y={540} h={24} w={43} text="K* u" tx={2708} label="Gain1" lx={2718} ly={559} />
      <Sum x={2756} y={460} signs={[["l", "+"], ["b", "-"]]} />
      <Bar x={2808} y1={443} y2={477} />
      <Sum x={2856} y={508} signs={[["l", "+"], ["b", "+"]]} />

      {/* helicopter */}
      <Block x={2896} y={404} w={56} h={139} fill="url(#green)" label="Conversion" labelY={551} />
      <T port x={2898} y={440} anchor="start">Vd [V]</T>
      <T port x={2949} y={440} anchor="end">Vf [V]</T>
      <T port x={2898} y={508} anchor="start">Vs [V]</T>
      <T port x={2949} y={508} anchor="end">Vb [V]</T>
      <Block x={2984} y={402} w={176} h={139} fill="url(#green)" label="Heli 3D" labelY={548} />
      <T port x={2987} y={441} anchor="start">Vf [V]</T>
      <T port x={2987} y={509} anchor="start">Vb [V]</T>
      {["Travel [rad]", "Travel rate [rad/s]", "Pitch [rad]", "Pitch rate [rad/s]", "Elevation [rad]", "Elevation rate [rad/s]"].map((s, i) => (
        <T port key={s} x={3157} y={413 + i * 24} anchor="end">{s}</T>
      ))}
      <Block x={2956} y={559} w={24} h={25} text="V_0" label="Constant" labelY={552} />
      <Sum x={3196} y={508} signs={[["l", "+"], ["b", "-"]]} />
      <Block x={3160} y={623} w={24} h={25} text="0.4" label="Constant1" />
      <Bar x={3324} y1={402} y2={542} />
      <Block x={3420} y={399} w={24} h={25} label="Scope3" />
      <rect x="3424" y="402" width="17" height="10" rx="1" fill="#fff" stroke="#000" />
      <FileBlock id="f3" x={3420} y={460} text="Encoder.mat" label="To File3" />

      {/* estimator */}
      <Gain x={2304} y={812} h={25} w={70} text="B_2* u" tx={2325} label="Gain" lx={2340} ly={832} />
      <Gain x={2512} y={776} h={25} w={-71} text="A_2* u" tx={2490} label="Gain6" lx={2476} ly={755} />
      <Gain x={2516} y={868} h={25} w={-71} text="L * C* u" tx={2494} label="Gain4" lx={2480} ly={847} />
      <Sum x={2408} y={812} signs={[["l", "+"], ["t", "+"], ["b", "+"]]} />
      <Sum x={2556} y={868} signs={[["r", "+"], ["t", "-"]]} />
      <Frac x={2468} y={800} w={24} h={24} top="1" bottom="s" label="Integrator2" />
      <FileBlock id="f2" x={2656} y={800} text="Estimators.mat" label="To File2" />

      {/* inertial measurement unit */}
      <Block x={2892} y={756} w={96} h={167} fill="url(#light)" label="IMU" />
      {["accelerometer, m/s^2", "gyroscope, rad/s", "magnetometer, uT", "temperature, deg C", "New data, 0/1"].map((s, i) => (
        <T port key={s} x={2985} y={776 + i * 32} anchor="end">{s}</T>
      ))}
      <Port x={2988} y={840} />
      <Port x={2988} y={872} />
      <Port x={2988} y={904} />
      <FileBlock id="f5" x={3120} y={796} text="Gyro.mat" label="To File5" />
      <FileBlock id="f4" x={3120} y={856} text="EulerAngles.mat" label="To File4" />
      <Block x={3100} y={912} w={32} h={48} fill="url(#light)" label="accel->angles" />
      <T port x={3102} y={924} anchor="start">In1</T>
      <T port x={3102} y={948} anchor="start">In2</T>
      <T x={3130} y={936} anchor="end">Out1</T>

      <Bar x={3408} y1={706} y2={758} />
      <Block x={3497} y={653} w={164} h={106} stroke={2} label="Gyro vector to [pitch rate, elevation rate, travle rate]" />
      <T port x={3499} y={680} anchor="start">gyro_vec</T>
      <T port x={3499} y={732} anchor="start">euler_angles</T>
      <T port x={3657} y={708} anchor="end">euler_rates</T>
      <g transform="translate(3572 700) scale(.5)"><MatlabMark /></g>
      <T x={3579} y={718}>gyro_vec_to_euler_rates</T>
      <FileBlock id="f6" x={3760} y={696} text="EulerRates.mat" label="To File6" />
      <Bar x={3560} y1={855} y2={905} />
      <Bar x={3560} y1={908} y2={963} />
      <Port x={3564} y={952} />
      <Bar x={3660} y1={896} y2={976} />
    </svg>
  );
}

/* ------------------------------------------------------------------ */
/* Simulink window                                                     */
/* ------------------------------------------------------------------ */

function SimTool({ label, children }) {
  return (
    <button type="button" aria-label={label} className="flex w-[31px] justify-center">
      <Icon size={22}>{children}</Icon>
    </button>
  );
}

function Caret({ label }) {
  return (
    <button type="button" aria-label={label} className="flex w-3 justify-center">
      <svg width="8" height="5"><path d="M0 0h8L4 5z" fill="#6b6b6b" /></svg>
    </button>
  );
}

function BarSep() {
  return <span className="mx-0.5 w-px self-stretch bg-[#a9a9a9]" />;
}

function SimulinkToolbar() {
  const s = { stroke: "#a8a8a8" };
  return (
    <div className="flex h-[42px] items-center border-t border-b border-t-[#e6e6e6] border-b-[#a0a0a0] bg-[#f0f0f0]">
      <span className="w-0.5" />
      <SimTool label="New model">
        <path d="M2 1.500h12v13H2z" fill="#eee" {...s} />
        <path d="M4 5l4 2.500-4 2.500zM8 7.500h3v4" fill="#bbb" {...s} />
        <path d="M12 10h3v2.500h2.500v3H15V18h-3v-2.500H9.500v-3H12z" fill="#ddd" {...s} />
      </SimTool>
      <Caret label="New options" />
      <SimTool label="Save">
        <path d="M3 1.500h12v15H4.500L3 15z" fill="#ddd" stroke="#8d8d8d" />
        <path d="M5.500 1.500h7v6h-7zM6 11h7v5.500H6zM7 3.500h4M7 5.500h4" fill="#fff" stroke="#9a9a9a" />
      </SimTool>
      <BarSep />
      <SimTool label="Back"><path d="M2 9l6-6v3.500h7v5H8V15z" fill="#e4e4e4" {...s} /></SimTool>
      <SimTool label="Forward"><path d="M16 9l-6-6v3.500H3v5h7V15z" fill="#e4e4e4" {...s} /></SimTool>
      <SimTool label="Up to parent"><path d="M9 2l6 6h-3.500v8h-5V8H3z" fill="#e4e4e4" {...s} /></SimTool>
      <BarSep />
      <SimTool label="Library browser">
        <path d="M1 1h7v7H1zM10 1h7v7h-7zM1 10h7v7H1zM10 10h7v7h-7z" fill="#d6d6d6" {...s} />
        <path d="M2 7l5-5M11 5c1-3 2-3 2.500-.5S15 7 16 4M3 12h3v3H3zM12 15h2v-3h2" stroke="#8f8f8f" />
      </SimTool>
      <SimTool label="Model configuration">
        <circle cx="9" cy="9" r="7" stroke="#b5b5b5" strokeWidth="2.500" strokeDasharray="3 1.500" />
        <circle cx="9" cy="9" r="5.500" fill="#d2d2d2" stroke="#9c9c9c" />
        <circle cx="9" cy="9" r="2.500" fill="#f0f0f0" stroke="#9c9c9c" />
      </SimTool>
      <Caret label="Configuration options" />
      <SimTool label="Model explorer">
        <path d="M2 2h14v14H2z" fill="#eee" {...s} />
        <path d="M2 3h14" stroke="#888" strokeWidth="2" />
        <path d="M4 7.500h5M10.500 7.500h4M4 10.500h5M10.500 10.500h4M4 13.500h5M10.500 13.500h4" stroke="#888" strokeWidth="1.500" />
      </SimTool>
      <Caret label="Explorer options" />
      <BarSep />
      <SimTool label="Connect to target">
        <circle cx="12.500" cy="5" r="3" stroke="#9f9f9f" strokeWidth="2" />
        <circle cx="5" cy="13" r="3" stroke="#9f9f9f" strokeWidth="2" />
        <path d="M6.500 11.500l5-5" stroke="#8a8a8a" strokeWidth="2" />
      </SimTool>
      <SimTool label="Run">
        <circle cx="9" cy="9" r="8" fill="#e6e6e6" stroke="#b5b5b5" />
        <path d="M6.500 5l6 4-6 4z" fill="#777" />
      </SimTool>
      <SimTool label="Stop">
        <circle cx="9" cy="9" r="8" fill="#e6e6e6" stroke="#b5b5b5" />
        <path d="M6 6h6v6H6z" fill="#858585" />
      </SimTool>
      <BarSep />
      <SimTool label="Simulation data inspector">
        <path d="M1 1h16v16H1z" fill="#eee" {...s} />
        <path d="M1 15C5 14 5 4 8 4s3 7 9 9M1 8c3-6 5-4 8 0s5 4 7-6" stroke="#969696" />
      </SimTool>
      <Caret label="Inspector options" />
      <input aria-label="Stop time" readOnly value="inf" className="ml-2.5 h-5 w-20 border border-[#b5b5b5] bg-[#f4f4f4] px-0.5 text-[#777] outline-none" />
      <div className="relative ml-[18px] flex">
        <select aria-label="Simulation mode" defaultValue="External" className="h-5 w-[158px] appearance-none rounded-none border border-[#b2b2b2] bg-[#cbcbcb] px-0.5 text-[#6d6d6d]">
          <option>External</option>
        </select>
        <svg width="8" height="5" className="pointer-events-none absolute top-2 right-[6px]"><path d="M0 0h8L4 5z" fill="#f4f4f4" stroke="#999" /></svg>
      </div>
      <span className="w-2" />
      <BarSep />
      <SimTool label="Model advisor">
        <circle cx="9" cy="9" r="8" fill="#e6e6e6" stroke="#b0b0b0" />
        <path d="M5 9.500l3 3 5.500-8" stroke="#b0b0b0" strokeWidth="2" />
      </SimTool>
      <Caret label="Advisor options" />
      <BarSep />
      <SimTool label="Build model">
        <path d="M2 8h14v9H2z" fill="#e2e2e2" stroke="#a5a5a5" />
        <path d="M4 11h10M4 14h10" stroke="#8c8c8c" strokeWidth="1.500" strokeDasharray="1.500 1.500" />
        <path d="M4.500 1v4M9 1v4M13.500 1v4M3 4l1.500 2L6 4M7.500 4L9 6l1.500-2M12 4l1.500 2L15 4" stroke="#8c8c8c" />
      </SimTool>
      <Caret label="Build options" />
    </div>
  );
}

function SimulinkGlyph({ width = 15, height = 16 }) {
  return (
    <svg width={width} height={height} viewBox="0 0 15 16" fill="none">
      <path d="M1 .5l7 4.500-7 4.500z" fill="#2d8fc8" stroke="#1c4f75" />
      <path d="M8 5h3.500v4" stroke="#333" />
      <path d="M9 9h5v6H9z" fill="#d8542c" stroke="#7c2810" />
    </svg>
  );
}

function SideTool({ label, children }) {
  return (
    <button type="button" aria-label={label} className="flex h-7 w-8 items-center justify-center">
      <svg width="16" height="16" viewBox="0 0 16 16" fill="none" stroke="#444">{children}</svg>
    </button>
  );
}

function Palette() {
  return (
    <aside className="flex w-8 flex-col items-center bg-[#f0f0f0]">
      <SideTool label="Hide browser">
        <circle cx="8" cy="8" r="5" />
        <path d="M11 8H6M8 5.500L5.500 8 8 10.500" strokeWidth="1.600" />
      </SideTool>
      <span className="mt-1 mb-[5px] h-px w-[18px] bg-[#a8a8a8]" />
      <SideTool label="Zoom">
        <path d="M.5.5h15v15H.5z" strokeDasharray="2 2" stroke="#888" />
        <circle cx="7.500" cy="7" r="4.500" fill="#fff" />
        <path d="M5.500 7h4M7.500 5v4M11 10.500l4 4.500" strokeWidth="1.500" />
      </SideTool>
      <SideTool label="Fit to view">
        <path d="M.5 1.500h15v13H.5z" fill="#fff" />
        <path d="M3 6V4h2M3 4l3 2.500M13 6V4h-2M13 4l-3 2.500M3 10v2h2M3 12l3-2.500M13 10v2h-2M13 12l-3-2.500" />
      </SideTool>
      <SideTool label="Sample time">
        <path d="M1 5h12M1 11h12M10 2l4 3-4 3M10 8l4 3-4 3" />
      </SideTool>
      <SideTool label="Annotation">
        <path d="M1 2.500h14v11H1z" fill="#fff" />
        <path d="M3 11.500l2-6h1l2 6M4 9.500h3M9.500 5.500H14M9.500 8H14M9.500 10.500H14" />
      </SideTool>
      <SideTool label="Image">
        <path d="M1 2h14v12H1z" fill="#dcdcdc" stroke="#777" />
        <path d="M2 12l3-5 3 3 2-3 4 5.500z" fill="#888" stroke="#777" />
      </SideTool>
      <SideTool label="Area">
        <path d="M1.500 1.500h13v13h-13z" fill="#e8e8fa" stroke="#888" />
      </SideTool>
      <span className="flex-1" />
      <SideTool label="Screenshot">
        <path d="M0 3.500h4l1-1.500h6l1 1.500h4v10H0z" fill="#999" stroke="#666" />
        <circle cx="8" cy="8.500" r="3.500" fill="#555" stroke="#ddd" />
      </SideTool>
      <SideTool label="Bookmarks">
        <path d="M.5 1.500h15v13H.5z" fill="#eee" stroke="#666" />
        <path d="M9 3h5v4H9zM2 10h5v3H2zM9 10h5v3H9z" fill="#888" stroke="none" />
        <path d="M2 0h5v9L4.500 7 2 9z" fill="#333" stroke="none" />
      </SideTool>
      <SideTool label="More">
        <path d="M3 4l4 4-4 4M8 4l4 4-4 4" strokeWidth="1.500" />
      </SideTool>
    </aside>
  );
}

function SimulinkWindow() {
  return (
    <section className="flex flex-1 flex-col bg-[#f0f0f0] text-black">
      <header className="flex h-6 items-center bg-white text-[#8e8e8e]">
        <span className="ml-px flex w-[22px] justify-center"><SimulinkGlyph /></span>
        <h1 className="flex-1">heli_q8 * - Simulink academic use</h1>
        <WindowButtons className="mr-1.5 flex h-4 items-center" />
      </header>
      <MenuBar
        className="flex h-5 items-center bg-white text-[#6d6d6d]"
        items={["File", "Edit", "View", "Display", "Diagram", "Simulation", "Analysis", "Code", "Tools", "QUARC", "Help"]}
      />
      <SimulinkToolbar />
      <div className="flex h-[21px]">
        <button type="button" className="w-[58px] border-r border-[#b0b0b0] bg-white text-center">heli_q8</button>
        <span className="flex-1 border-b border-[#828790]" />
      </div>
      <div className="flex flex-1">
        <Palette />
        <div className="flex min-w-0 flex-1 flex-col border border-r-0 border-[#828790] bg-white">
          <div className="flex h-[30px] items-center border-b-2 border-[#828790] pr-2 pl-0.5">
            <span className="flex h-4 w-4 items-center justify-center border border-[#999] bg-[#eee]">
              <SimulinkGlyph width={12} height={13} />
            </span>
            <button type="button" className="mr-1.5 ml-0.5">heli_q8</button>
            <svg width="6" height="9"><path d="M0 0l6 4.500L0 9z" fill="#000" /></svg>
            <span className="flex-1" />
            <svg width="8" height="5"><path d="M0 0h8L4 5z" fill="#000" /></svg>
          </div>
          <div className="flex flex-1">
            <ModelCanvas />
            <div className="flex w-4 flex-col bg-[#f0f0f0]">
              <span className="h-4" />
              <span className="w-full flex-[836] bg-[#cdcdcd]" />
              <span className="flex-[149]" />
            </div>
          </div>
        </div>
      </div>
      <footer className="flex h-5 items-center">
        <span className="w-1/2 pl-1.5">Ready</span>
        <a href="#diagnostics" className="text-[#000080]">View diagnostics</a>
        <span className="ml-2 flex-1">80%</span>
        <a href="#solver" className="pr-0.5 text-[#0000a0]">ode1</a>
      </footer>
    </section>
  );
}

/* ------------------------------------------------------------------ */
/* Taskbar                                                             */
/* ------------------------------------------------------------------ */

function TaskButton({ label, children, className = "flex w-12 items-center justify-center" }) {
  return (
    <button type="button" aria-label={label} className={className}>
      {children}
    </button>
  );
}

function Clock() {
  return (
    <time className="w-14 text-center leading-[18px] whitespace-nowrap">
      11:03
      <br />
      24.10.2020
    </time>
  );
}

function Taskbar({ tray }) {
  return (
    <footer className="flex h-10 items-stretch bg-[#04080e] text-white">
      <TaskButton label="Start">
        <svg width="16" height="16" fill="#fff"><path d="M0 2.300L6.500 1.400V7.600H0zM7.300 1.300L16 0V7.600H7.300zM0 8.400H6.500V14.600L0 13.700zM7.300 8.400H16V16L7.300 14.700z" /></svg>
      </TaskButton>
      <TaskButton label="Search">
        <svg width="17" height="17" fill="none" stroke="#fff" strokeWidth="1.400"><circle cx="10" cy="6.500" r="5.500" /><path d="M6 10.500L1 16" /></svg>
      </TaskButton>
      <TaskButton label="Task view">
        <svg width="17" height="17" fill="none" stroke="#fff"><path d="M.5 2.500V.5M11.500 0v2.500H.5M.5 5.500h11v6H.5zM.5 16v-2h11v2M15.500 0v4M15.500 9v7" /><path d="M14 5h3v3h-3z" fill="#fff" stroke="none" /></svg>
      </TaskButton>
      <span className="w-1" />
      <TaskButton label="Edge">
        <FaEdgeLegacy size={21} color="#0a84e0" />
      </TaskButton>
      <TaskButton label="MATLAB" className="flex w-12 items-center justify-center border-b-2 border-[#76b9ed] bg-[#383c40]">
        <svg width="23" height="22" viewBox="0 0 24 23"><MatlabMark /></svg>
      </TaskButton>
      <span className="flex-1" />
      {tray && (
        <div className="flex items-center">
          <TaskButton label="People" className="flex w-12 justify-center">
            <svg width="16" height="16" fill="none" stroke="#fff" strokeWidth="1.200"><circle cx="11" cy="4" r="3" /><circle cx="5" cy="8.500" r="2.500" /><path d="M1 15c0-5 8-5 8 0M8 8.500c3-2.500 7-1 7 3" /></svg>
          </TaskButton>
          <TaskButton label="Show hidden icons" className="flex w-6 justify-center">
            <svg width="12" height="7" fill="none" stroke="#fff" strokeWidth="1.300"><path d="M.5 6.500L6 1l5.500 5.500" /></svg>
          </TaskButton>
          <TaskButton label="Network" className="flex w-6 justify-center">
            <svg width="18" height="16" fill="none" stroke="#fff"><path d="M1.500 1.500h3v4h-3zM6 1.500h9.500v8M3 5.500v7h6M6 9.500h3" /><path d="M11.500 6l5 9h-10z" fill="#f8c21c" stroke="none" /><path d="M11.500 9v3M11.500 13v1" stroke="#222" /></svg>
          </TaskButton>
          <TaskButton label="Volume" className="flex w-6 justify-center">
            <svg width="17" height="14" fill="none" stroke="#fff"><path d="M1 5h2l3.500-4v12L3 9H1zM9 5q1 2 0 4M11 3q2.500 4 0 8" /><path d="M13.500 1.500q3.500 5.500 0 11" stroke="#888" /></svg>
          </TaskButton>
          <button type="button" className="w-9 text-center">NOB</button>
          <Clock />
          <TaskButton label="Notifications" className="flex w-14 justify-center">
            <svg width="26" height="26" fill="none"><path d="M1 3h16v11H9l-4 4v-4H1z" fill="#fff" /><path d="M4 6h10M4 8.500h10M4 11h7" stroke="#111" /><circle cx="16.500" cy="17.500" r="7.500" fill="#222" stroke="#999" /><text x="14" y="22" className="fill-white text-[11px] font-semibold">1</text></svg>
          </TaskButton>
        </div>
      )}
      {tray ? <span className="mr-1 w-px bg-[#555]" /> : <div className="flex items-center pr-1.5"><Clock /></div>}
    </footer>
  );
}

export default function App() {
  return (
    <main className="grid min-h-screen grid-cols-2 font-['Open_Sans','Noto_Sans',sans-serif] text-[11px] leading-4">
      <div className="flex min-w-0 flex-col">
        <FigureWindow />
        <Taskbar tray />
      </div>
      <div className="flex min-w-0 flex-col">
        <SimulinkWindow />
        <Taskbar />
      </div>
    </main>
  );
}
